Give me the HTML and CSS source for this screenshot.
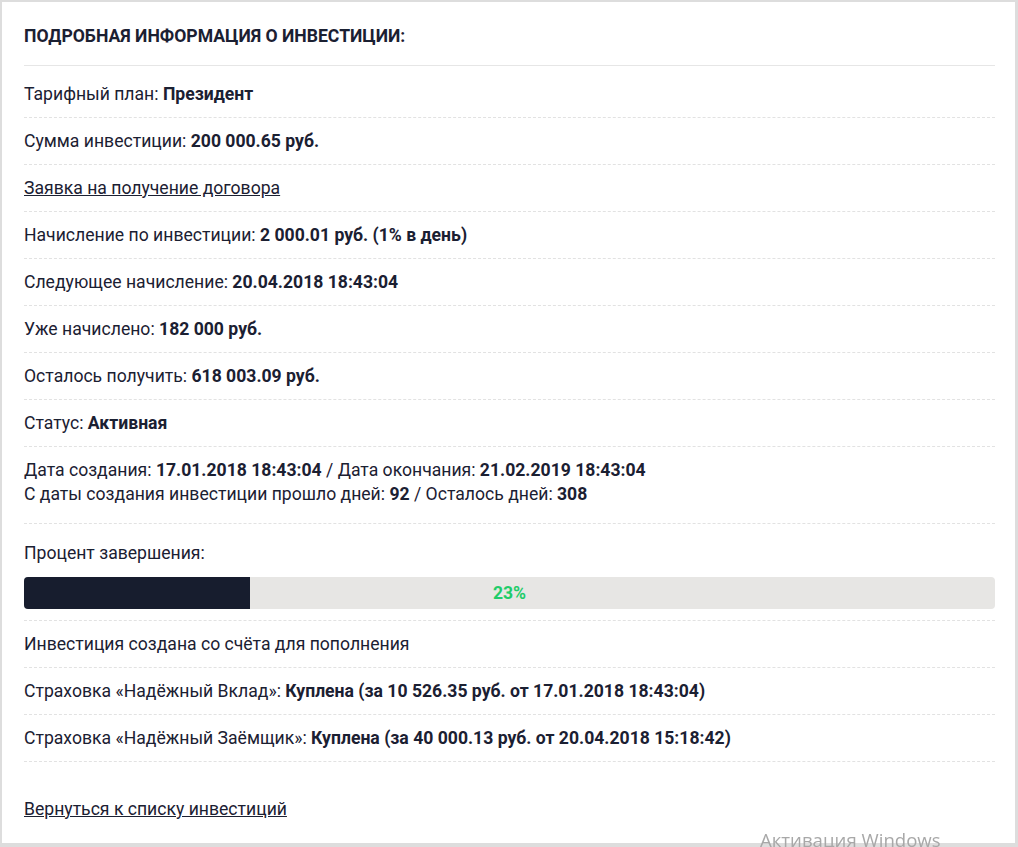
FILE: index.html
```html
<!DOCTYPE html>
<html lang="ru">
<head>
<meta charset="utf-8">
<title>Подробная информация о инвестиции</title>
<link rel="stylesheet" href="styles.css">
</head>
<body>
<div class="card">
  <div class="card-header">Подробная информация о инвестиции:</div>
  <ul class="info-list">
    <li class="row">Тарифный план: <b>Президент</b></li>
    <li class="row">Сумма инвестиции: <b>200 000.65 руб.</b></li>
    <li class="row"><a href="#" class="link">Заявка на получение договора</a></li>
    <li class="row">Начисление по инвестиции: <b>2 000.01 руб. (1% в день)</b></li>
    <li class="row">Следующее начисление: <b>20.04.2018 18:43:04</b></li>
    <li class="row">Уже начислено: <b>182 000 руб.</b></li>
    <li class="row">Осталось получить: <b>618 003.09 руб.</b></li>
    <li class="row">Статус: <b>Активная</b></li>
    <li class="row row-dates">Дата создания: <b>17.01.2018 18:43:04</b> / Дата окончания: <b>21.02.2019 18:43:04</b><br>С даты создания инвестиции прошло дней: <b>92</b> / Осталось дней: <b>308</b></li>
    <li class="row row-progress">
      <div>Процент завершения:</div>
      <div class="progress">
        <div class="progress-fill" style="width: 23.3%"></div>
        <span class="progress-label">23%</span>
      </div>
    </li>
    <li class="row">Инвестиция создана со счёта для пополнения</li>
    <li class="row">Страховка «Надёжный Вклад»: <b>Куплена (за 10 526.35 руб. от 17.01.2018 18:43:04)</b></li>
    <li class="row">Страховка «Надёжный Заёмщик»: <b>Куплена (за 40 000.13 руб. от 20.04.2018 15:18:42)</b></li>
  </ul>
  <div class="back"><a href="#" class="link">Вернуться к списку инвестиций</a></div>
</div>
<div class="watermark">Активация Windows</div>
</body>
</html>
```
FILE: styles.css
```css
html, body {
  margin: 0;
  padding: 0;
}
body {
  background: #dddddd;
  padding: 2px 3px 0 2px;
  height: 847px;
  box-sizing: border-box;
  overflow: hidden;
  font-family: Roboto, "Liberation Sans", Arial, sans-serif;
  font-size: 17.6px;
  line-height: 24px;
  color: #1b2032;
}
.card {
  background: #ffffff;
  padding: 22px 20px 22px 22px;
}
.card-header {
  font-weight: 700;
  text-transform: uppercase;
  padding-bottom: 17px;
  border-bottom: 1px solid #e6e6e6;
}
.info-list {
  list-style: none;
  margin: 5px 0 0;
  padding: 0;
}
.row {
  padding: 11px 0;
  border-bottom: 1px dashed #e2e2e2;
}
.row b {
  font-weight: 700;
}
.row-dates {
  padding-bottom: 17px;
}
.row-progress {
  padding-top: 17px;
}
.progress {
  position: relative;
  margin-top: 12px;
  height: 32px;
  background: #e7e6e4;
  border-radius: 4px;
  overflow: hidden;
  display: flex;
  align-items: center;
  justify-content: center;
}
.progress-fill {
  position: absolute;
  left: 0;
  top: 0;
  bottom: 0;
  background: #171d2e;
}
.progress-label {
  position: relative;
  color: #1fcc6a;
  font-weight: 700;
}
.link {
  color: #1b2032;
  text-decoration: underline;
}
.back {
  margin-top: 35px;
}
.watermark {
  position: fixed;
  left: 760px;
  top: 828px;
  font-family: "Open Sans", "Noto Sans", sans-serif;
  font-size: 18.6px;
  line-height: 24px;
  color: #a8a8a8;
}
```
